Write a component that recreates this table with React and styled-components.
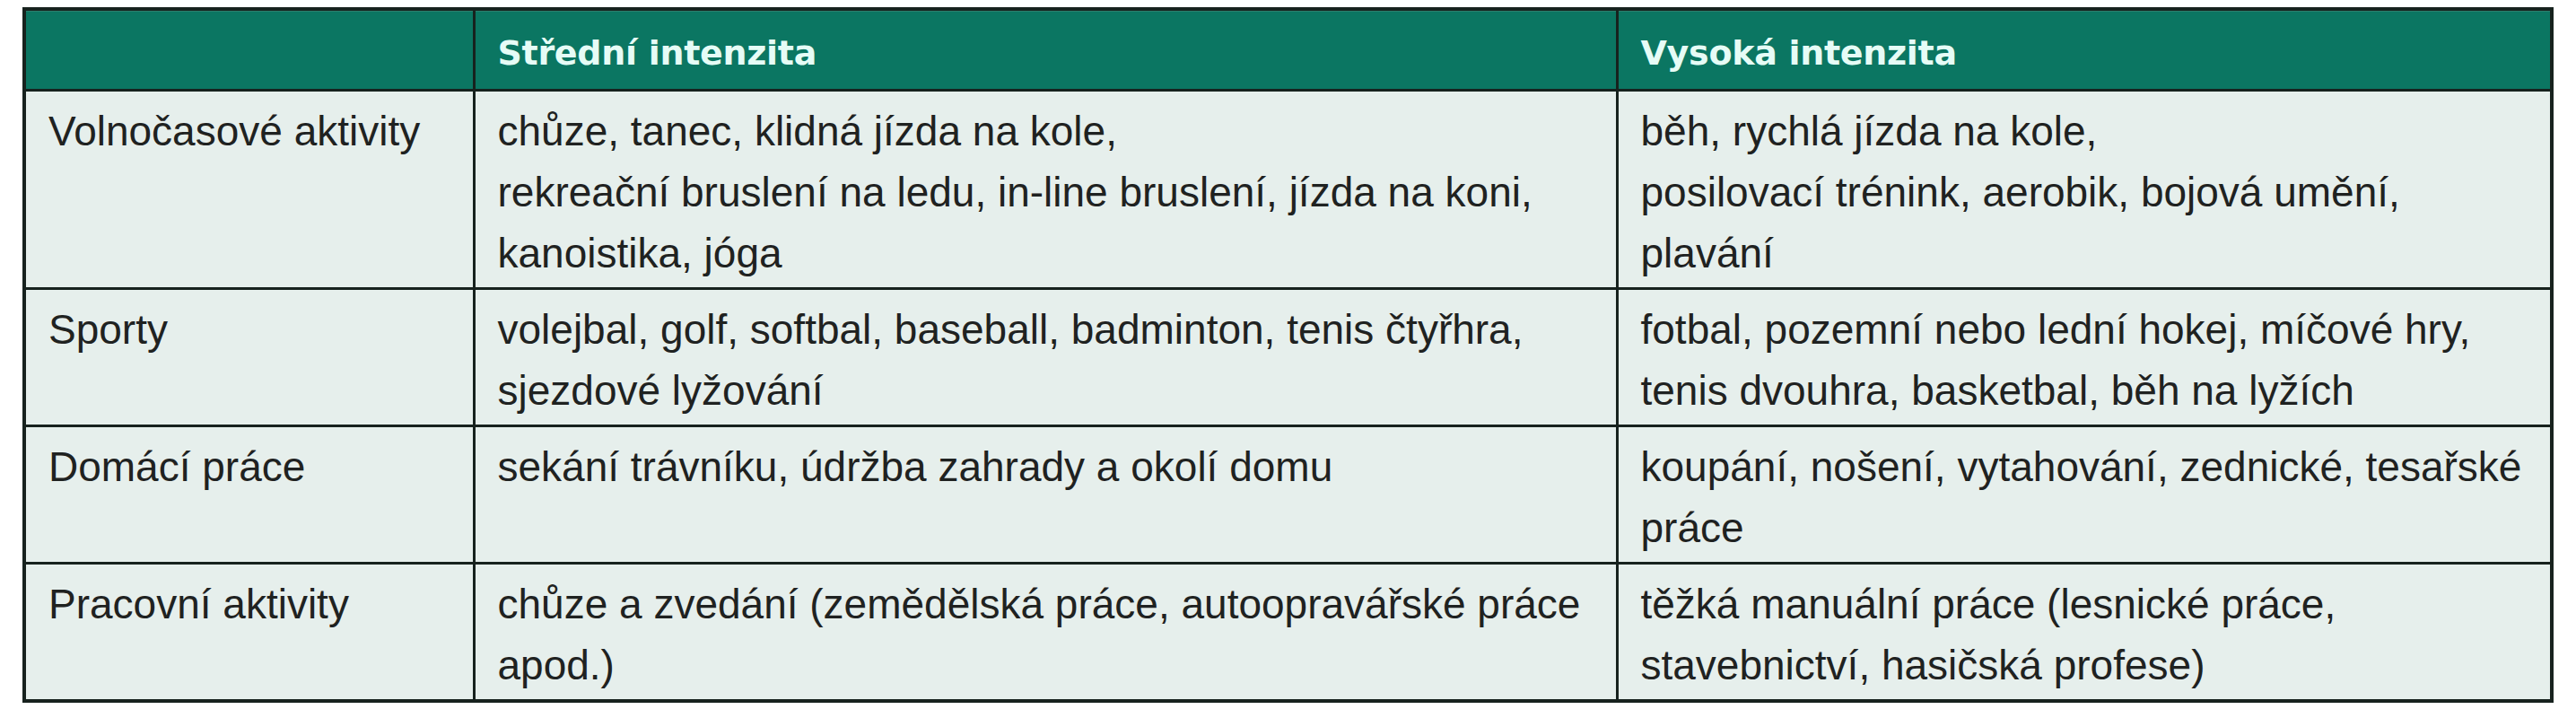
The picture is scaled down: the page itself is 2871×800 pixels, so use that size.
import React from 'react';
import styled, { createGlobalStyle } from 'styled-components';

const GlobalStyle = createGlobalStyle`
  html, body {
    margin: 0;
    padding: 0;
    background: #ffffff;
  }
`;

const Page = styled.div`
  padding: 8px 29px 0 25px;
  background: #ffffff;
`;

const Table = styled.table`
  width: 2817px;
  table-layout: fixed;
  border-collapse: collapse;
  border: 4px solid #17221e;
  font-family: 'Liberation Sans', Arial, sans-serif;
`;

const HeadRow = styled.tr`
  background: #0b7662;
  box-shadow: inset 0 3px 0 #2b7f6d;
`;

const Th = styled.th`
  height: 81px;
  padding: 6px 25px 0;
  text-align: left;
  vertical-align: middle;
  font-family: 'DejaVu Sans', sans-serif;
  font-weight: 700;
  font-size: 38px;
  letter-spacing: -0.3px;
  color: #e6fcf6;
  border-left: 3px solid #17221e;
  border-bottom: 3px solid #17221e;
  white-space: nowrap;
`;

const Row = styled.tr`
  background: #e6efec;
`;

const Td = styled.td`
  padding: 10px 25px 4px;
  vertical-align: top;
  font-size: 46px;
  line-height: 68px;
  color: #1f2221;
  border: 3px solid #17221e;
  white-space: nowrap;
`;

const columns = ['501px', '1274px', '1042px'];

const rows = [
  {
    label: 'Volnočasové aktivity',
    medium: ['chůze, tanec, klidná jízda na kole,', 'rekreační bruslení na ledu, in-line bruslení, jízda na koni,', 'kanoistika, jóga'],
    high: ['běh, rychlá jízda na kole,', 'posilovací trénink, aerobik, bojová umění,', 'plavání'],
  },
  {
    label: 'Sporty',
    medium: ['volejbal, golf, softbal, baseball, badminton, tenis čtyřhra,', 'sjezdové lyžování'],
    high: ['fotbal, pozemní nebo lední hokej, míčové hry,', 'tenis dvouhra, basketbal, běh na lyžích'],
  },
  {
    label: 'Domácí práce',
    medium: ['sekání trávníku, údržba zahrady a okolí domu'],
    high: ['koupání, nošení, vytahování, zednické, tesařské', 'práce'],
  },
  {
    label: 'Pracovní aktivity',
    medium: ['chůze a zvedání (zemědělská práce, autoopravářské práce', 'apod.)'],
    high: ['těžká manuální práce (lesnické práce,', 'stavebnictví, hasičská profese)'],
  },
];

function Lines({ items }) {
  return items.map((line, i) => (
    <React.Fragment key={i}>
      {i > 0 && <br />}
      {line}
    </React.Fragment>
  ));
}

export default function App() {
  return (
    <>
      <GlobalStyle />
      <Page>
        <Table>
          <colgroup>
            {columns.map((w) => (
              <col key={w} style={{ width: w }} />
            ))}
          </colgroup>
          <thead>
            <HeadRow>
              <Th />
              <Th>Střední intenzita</Th>
              <Th>Vysoká intenzita</Th>
            </HeadRow>
          </thead>
          <tbody>
            {rows.map((row) => (
              <Row key={row.label}>
                <Td>{row.label}</Td>
                <Td>
                  <Lines items={row.medium} />
                </Td>
                <Td>
                  <Lines items={row.high} />
                </Td>
              </Row>
            ))}
          </tbody>
        </Table>
      </Page>
    </>
  );
}
